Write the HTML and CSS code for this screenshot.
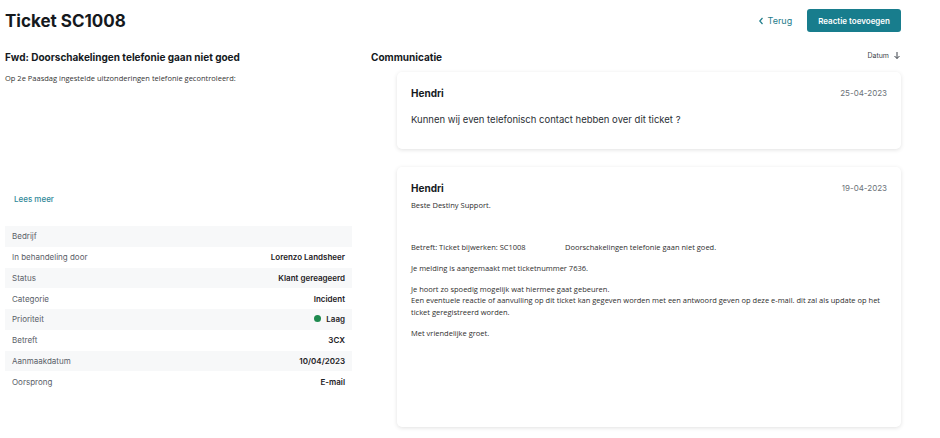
FILE: index.html
```html
<html lang="en">
<head>
    <meta charset="UTF-8">
    <meta name="viewport" content="width=device-width, initial-scale=1.0">
    <title>Ticket SC1008</title>
    <link rel="stylesheet" href="styles.css">
</head>
<body>
    <div id="page">
        <div id="header">
            <h1 id="ticket-title">Ticket SC1008</h1>
            <div id="actions">
                <a class="back-link" href="#">
                    <svg width="7" height="8" viewBox="0 0 7 8"><path d="M4.5 1 L1.8 4 L4.5 7" fill="none" stroke="currentColor" stroke-width="1.2"/></svg>
                    Terug
                </a>
                <button id="add-button">Reactie toevoegen</button>
            </div>
        </div>

        <div id="content">
            <div id="ticket-info">
                <h2 class="section-title">Fwd: Doorschakelingen telefonie gaan niet goed</h2>
                <div class="description">
                    <p>Op 2e Paasdag ingestelde uitzonderingen telefonie gecontroleerd:</p>
                </div>
                <a class="read-more" href="#">Lees meer</a>

                <table id="details">
                    <tr>
                        <td class="label">Bedrijf</td>
                        <td class="value"></td>
                    </tr>
                    <tr>
                        <td class="label">In behandeling door</td>
                        <td class="value">Lorenzo Landsheer</td>
                    </tr>
                    <tr>
                        <td class="label">Status</td>
                        <td class="value">Klant gereageerd</td>
                    </tr>
                    <tr>
                        <td class="label">Categorie</td>
                        <td class="value">Incident</td>
                    </tr>
                    <tr>
                        <td class="label">Prioriteit</td>
                        <td class="value"><span class="dot"></span>Laag</td>
                    </tr>
                    <tr>
                        <td class="label">Betreft</td>
                        <td class="value">3CX</td>
                    </tr>
                    <tr>
                        <td class="label">Aanmaakdatum</td>
                        <td class="value">10/04/2023</td>
                    </tr>
                    <tr>
                        <td class="label">Oorsprong</td>
                        <td class="value">E-mail</td>
                    </tr>
                </table>
            </div>

            <div id="communication">
                <div class="comm-header">
                    <h2 class="section-title">Communicatie</h2>
                    <span class="sort">Datum
                        <svg width="8" height="9" viewBox="0 0 8 9"><path d="M4 1 V7.5 M1.5 5 L4 7.5 L6.5 5" fill="none" stroke="currentColor" stroke-width="1"/></svg>
                    </span>
                </div>

                <div class="message">
                    <div class="message-head">
                        <span class="author">Hendri</span>
                        <span class="date">25-04-2023</span>
                    </div>
                    <p class="message-text">Kunnen wij even telefonisch contact hebben over dit ticket ?</p>
                </div>

                <div class="message mail">
                    <div class="message-head">
                        <span class="author">Hendri</span>
                        <span class="date">19-04-2023</span>
                    </div>
                    <div class="mail-body">
                        <p>Beste Destiny Support.</p>
                        <p class="spacer"></p>
                        <p><span class="subject">Betreft: Ticket bijwerken: SC1008</span>Doorschakelingen telefonie gaan niet goed.</p>
                        <p>Je melding is aangemaakt met ticketnummer 7636.</p>
                        <p>Je hoort zo spoedig mogelijk wat hiermee gaat gebeuren.<br>
                        Een eventuele reactie of aanvulling op dit ticket kan gegeven worden met een antwoord geven op deze e-mail. dit zal als update op het ticket geregistreerd worden.</p>
                        <p>Met vriendelijke groet.</p>
                    </div>
                </div>
            </div>
        </div>
    </div>
</body>
</html>
```

FILE: styles.css
```css
body {
    margin: 0;
    font-family: Inter, "Noto Sans", sans-serif;
    color: #1d2125;
    background: white;
}

#page {
    width: 940px;
    box-sizing: border-box;
    padding: 0 39px 0 5px;
}

#header {
    height: 41px;
    display: flex;
    justify-content: space-between;
    align-items: center;
}

#ticket-title {
    margin: 0;
    font-size: 17px;
    font-weight: 700;
    color: #15191d;
}

#actions {
    display: flex;
    align-items: center;
    gap: 15px;
}

.back-link {
    display: flex;
    align-items: center;
    gap: 3px;
    font-size: 9px;
    color: #1f7d8c;
    text-decoration: none;
}

#add-button {
    height: 23px;
    padding: 0 11px;
    background: #187d8d;
    color: white;
    border: none;
    border-radius: 3px;
    font-family: Inter, sans-serif;
    font-size: 8px;
    font-weight: 600;
}

#content {
    display: grid;
    grid-template-columns: 347px 1fr;
    column-gap: 19px;
}

.section-title {
    margin: 0;
    font-size: 10px;
    font-weight: 700;
    color: #15191d;
}

#ticket-info .section-title {
    margin-top: 10px;
}

.description {
    height: 100px;
    padding-top: 10px;
    font-family: "Open Sans", "Noto Sans", sans-serif;
    font-size: 7.5px;
    color: #333;
}

.description p {
    margin: 0;
}

.read-more {
    display: block;
    margin: 21px 0 0 9px;
    font-size: 8px;
    font-weight: 500;
    color: #2f8898;
    text-decoration: none;
}

#details {
    width: 100%;
    margin-top: 22px;
    border-collapse: collapse;
    font-size: 8px;
}

#details tr:nth-child(odd) {
    background: #f7f8f9;
}

#details td {
    height: 20.75px;
    padding: 0 7px;
}

.label {
    color: #5a6068;
}

.value {
    text-align: right;
    font-weight: 600;
    color: #1d2125;
}

.dot {
    display: inline-block;
    width: 7px;
    height: 7px;
    margin-right: 5px;
    border-radius: 50%;
    background: #1e8a4f;
}

.comm-header {
    margin-top: 10px;
    display: flex;
    justify-content: space-between;
    align-items: flex-start;
}

.sort {
    display: flex;
    align-items: center;
    gap: 4px;
    font-size: 7px;
    color: #3d434a;
}

.message {
    margin: 9px 0 0 26px;
    padding: 15px 14px 0;
    min-height: 62px;
    border-radius: 5px;
    background: white;
    box-shadow: 0 1px 4px rgba(0, 0, 0, 0.12);
}

.message.mail {
    margin-top: 18px;
    min-height: 245px;
}

.message-head {
    display: flex;
    justify-content: space-between;
    align-items: center;
}

.author {
    font-size: 10px;
    font-weight: 700;
    color: #15191d;
}

.date {
    font-size: 8px;
    color: #6b7178;
}

.message-text {
    margin: 15px 0 0;
    font-size: 9.5px;
    color: #2b3036;
}

.mail-body {
    margin-top: 6px;
    font-family: "Open Sans", "Noto Sans", sans-serif;
    font-size: 7.5px;
    line-height: 11.5px;
    color: #2e2e2e;
}

.mail-body p {
    margin: 0 0 9.5px;
}

.mail-body .spacer {
    height: 11px;
}

.subject {
    display: inline-block;
    width: 154px;
}
```
